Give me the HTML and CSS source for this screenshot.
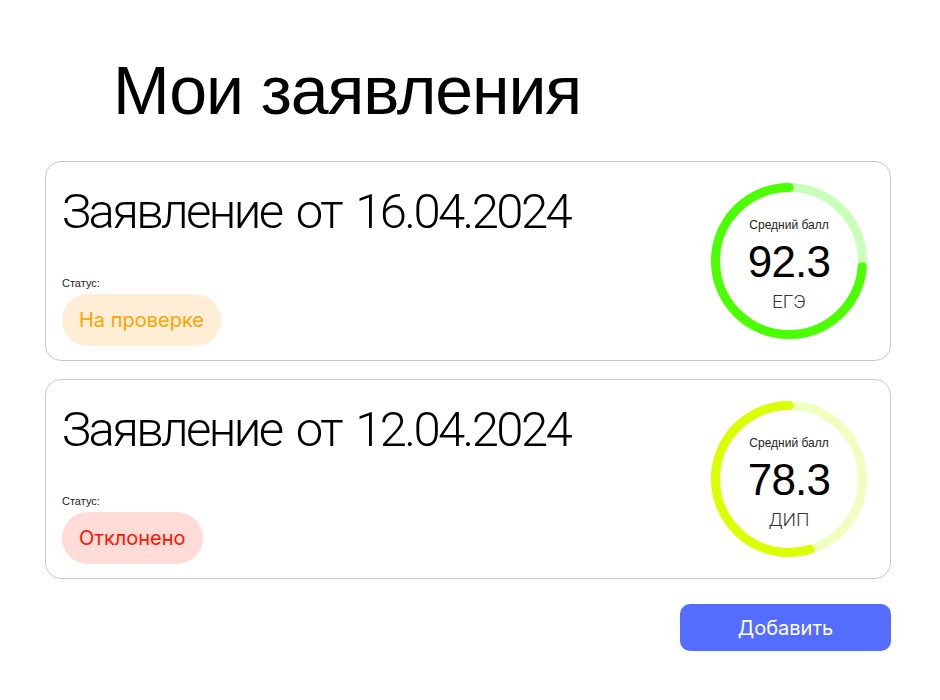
FILE: index.html
```html
<!DOCTYPE html>
<html lang="ru">
<head>
<meta charset="utf-8">
<title>Мои заявления</title>
<link rel="stylesheet" href="styles.css">
</head>
<body>
<main class="page">
  <h1 class="page-title">Мои заявления</h1>
  <section class="list">
    <article class="card">
      <div class="card-info">
        <h2 class="card-title">Заявление от 16.04.2024</h2>
        <div class="status-label">Статус:</div>
        <span class="badge badge-review">На проверке</span>
      </div>
      <div class="score">
        <svg class="ring" width="160" height="160" viewBox="0 0 160 160">
          <circle class="track track-green" cx="80" cy="80" r="73.5"/>
          <circle class="progress progress-green" cx="80" cy="80" r="73.5" transform="matrix(0,-1,-1,0,160,160)" stroke-dasharray="340 1000"/>
        </svg>
        <div class="score-text">
          <div class="score-caption">Средний балл</div>
          <div class="score-value">92.3</div>
          <div class="score-type">ЕГЭ</div>
        </div>
      </div>
    </article>
    <article class="card">
      <div class="card-info">
        <h2 class="card-title">Заявление от 12.04.2024</h2>
        <div class="status-label">Статус:</div>
        <span class="badge badge-rejected">Отклонено</span>
      </div>
      <div class="score">
        <svg class="ring" width="160" height="160" viewBox="0 0 160 160">
          <circle class="track track-lime" cx="80" cy="80" r="73.5"/>
          <circle class="progress progress-lime" cx="80" cy="80" r="73.5" transform="matrix(0,-1,-1,0,160,160)" stroke-dasharray="252 1000"/>
        </svg>
        <div class="score-text">
          <div class="score-caption">Средний балл</div>
          <div class="score-value">78.3</div>
          <div class="score-type">ДИП</div>
        </div>
      </div>
    </article>
  </section>
  <div class="actions">
    <button class="btn-add" type="button">Добавить</button>
  </div>
</main>
</body>
</html>
```

FILE: styles.css
```css
* { box-sizing: border-box; }
html, body { margin: 0; padding: 0; background: #fff; }
body { font-family: "Liberation Sans", Arial, sans-serif; color: #000; }

.page {
  width: 940px;
  padding: 56px 49px 0 45px;
}

.page-title {
  margin: 0 0 37px 68px;
  font-size: 68px;
  line-height: 68px;
  font-weight: 400;
  letter-spacing: -1.1px;
}

.list {
  display: flex;
  flex-direction: column;
  gap: 18px;
}

.card {
  display: flex;
  align-items: center;
  justify-content: space-between;
  height: 200px;
  border: 1px solid #c9c9c9;
  border-radius: 16px;
  padding: 0 21px 0 16px;
}

.card-info {
  display: flex;
  flex-direction: column;
  align-items: flex-start;
  align-self: stretch;
  padding-top: 25px;
}

.card-title {
  margin: 0;
  font-family: "Roboto", "Liberation Sans", sans-serif;
  font-size: 49px;
  line-height: 50px;
  font-weight: 300;
  letter-spacing: -2.6px;
  word-spacing: 5px;
}

.status-label {
  margin-top: 40px;
  font-size: 11px;
  line-height: 13px;
  color: #222;
}

.badge {
  margin-top: 4px;
  display: inline-flex;
  align-items: center;
  height: 52px;
  padding: 0 17px;
  border-radius: 26px;
  font-family: "Inter", "Roboto", sans-serif;
  font-size: 20px;
}
.badge-review { background: #feeed6; color: #ffa400; }
.badge-rejected { background: #ffdcd7; color: #ff1400; }

.score {
  position: relative;
  width: 160px;
  height: 160px;
}
.ring { display: block; }
.track, .progress { fill: none; stroke-width: 9; }
.progress { stroke-linecap: round; }
.track-green { stroke: #c9ffb9; }
.progress-green { stroke: #4cff00; }
.track-lime { stroke: #f0ffbf; }
.progress-lime { stroke: #d9ff00; }

.score-text {
  position: absolute;
  inset: 0;
  display: flex;
  flex-direction: column;
  align-items: center;
  padding-top: 37px;
}
.score-caption {
  font-size: 12px;
  line-height: 14px;
  color: #222;
}
.score-value {
  margin-top: 7px;
  font-size: 44px;
  line-height: 46px;
  letter-spacing: -0.8px;
}
.score-type {
  margin-top: 7px;
  font-family: "Roboto", "Liberation Sans", sans-serif;
  font-size: 19px;
  line-height: 20px;
  font-weight: 300;
  color: #333;
}

.actions {
  display: flex;
  justify-content: flex-end;
  margin-top: 25px;
}
.btn-add {
  width: 211px;
  height: 47px;
  border: 0;
  border-radius: 10px;
  background: #546dfe;
  color: #fff;
  font-family: "Inter", "Roboto", sans-serif;
  font-size: 20px;
  cursor: pointer;
}
```
